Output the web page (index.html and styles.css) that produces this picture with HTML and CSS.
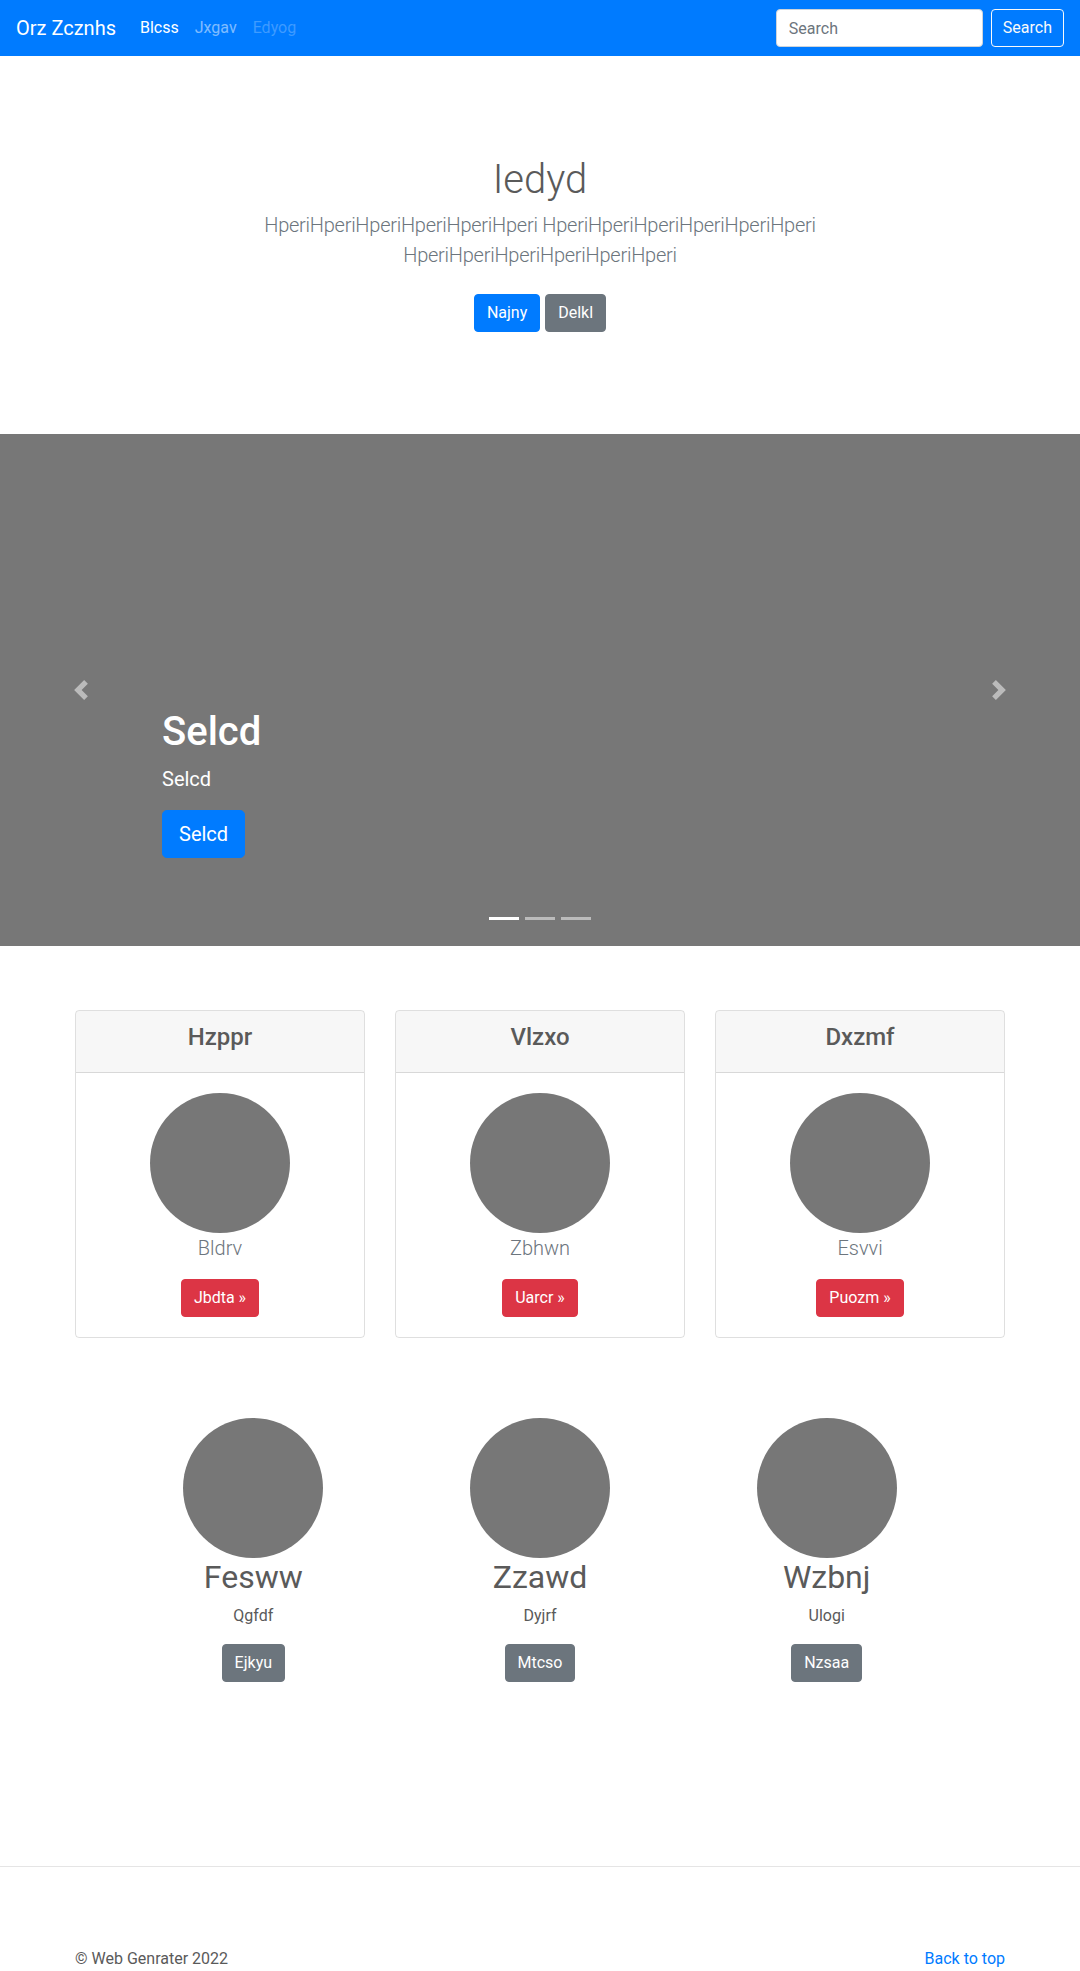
FILE: index.html
```html
<!DOCTYPE html>
<html lang="en">
<head>
<meta charset="utf-8">
<title>Orz Zcznhs</title>
<link rel="stylesheet" href="styles.css">
</head>
<body>
<nav class="navbar">
  <a class="brand" href="#">Orz Zcznhs</a>
  <ul class="nav">
    <li><a class="nav-link active" href="#">Blcss</a></li>
    <li><a class="nav-link" href="#">Jxgav</a></li>
    <li><a class="nav-link disabled" href="#">Edyog</a></li>
  </ul>
  <form class="search">
    <input class="search-input" type="text" placeholder="Search">
    <button class="search-btn" type="button">Search</button>
  </form>
</nav>

<section class="hero">
  <div class="hero-inner">
    <h1>Iedyd</h1>
    <p class="lead">HperiHperiHperiHperiHperiHperi HperiHperiHperiHperiHperiHperi HperiHperiHperiHperiHperiHperi</p>
    <p class="hero-actions">
      <a href="#" class="btn btn-primary">Najny</a>
      <a href="#" class="btn btn-secondary">Delkl</a>
    </p>
  </div>
</section>

<div class="carousel">
  <ol class="indicators">
    <li class="active"></li>
    <li></li>
    <li></li>
  </ol>
  <div class="carousel-caption">
    <h1>Selcd</h1>
    <p class="caption-text">Selcd</p>
    <p class="caption-actions"><a class="btn btn-lg btn-primary" href="#">Selcd</a></p>
  </div>
  <a class="carousel-control prev" href="#">
    <svg viewBox="0 0 8 8"><path d="M5.25 0l-4 4 4 4 1.5-1.5L4.25 4l2.5-2.5L5.25 0z"/></svg>
  </a>
  <a class="carousel-control next" href="#">
    <svg viewBox="0 0 8 8"><path d="M2.75 0l-1.5 1.5L3.75 4l-2.5 2.5L2.75 8l4-4-4-4z"/></svg>
  </a>
</div>

<div class="container">
  <div class="cards">
    <div class="card">
      <div class="card-header"><h4>Hzppr</h4></div>
      <div class="card-body">
        <div class="avatar"></div>
        <p class="card-text">Bldrv</p>
        <a href="#" class="btn btn-danger">Jbdta &raquo;</a>
      </div>
    </div>
    <div class="card">
      <div class="card-header"><h4>Vlzxo</h4></div>
      <div class="card-body">
        <div class="avatar"></div>
        <p class="card-text">Zbhwn</p>
        <a href="#" class="btn btn-danger">Uarcr &raquo;</a>
      </div>
    </div>
    <div class="card">
      <div class="card-header"><h4>Dxzmf</h4></div>
      <div class="card-body">
        <div class="avatar"></div>
        <p class="card-text">Esvvi</p>
        <a href="#" class="btn btn-danger">Puozm &raquo;</a>
      </div>
    </div>
  </div>
</div>

<div class="marketing">
  <div class="feature">
    <div class="avatar"></div>
    <h2>Fesww</h2>
    <p>Qgfdf</p>
    <a href="#" class="btn btn-secondary">Ejkyu</a>
  </div>
  <div class="feature">
    <div class="avatar"></div>
    <h2>Zzawd</h2>
    <p>Dyjrf</p>
    <a href="#" class="btn btn-secondary">Mtcso</a>
  </div>
  <div class="feature">
    <div class="avatar"></div>
    <h2>Wzbnj</h2>
    <p>Ulogi</p>
    <a href="#" class="btn btn-secondary">Nzsaa</a>
  </div>
</div>

<hr class="divider">

<footer class="container footer">
  <p>&copy; Web Genrater 2022</p>
  <p><a href="#" class="top-link">Back to top</a></p>
</footer>
</body>
</html>
```

FILE: styles.css
```css
* {
  box-sizing: border-box;
}

body {
  margin: 0;
  font-family: Roboto, "Liberation Sans", Arial, sans-serif;
  font-size: 16px;
  line-height: 1.5;
  color: #5a5a5a;
  background: #fff;
}

h1, h2, h4, p {
  margin: 0;
}

a {
  text-decoration: none;
}

/* Navbar */
.navbar {
  display: flex;
  align-items: center;
  height: 56px;
  padding: 8px 16px;
  background: #007bff;
}

.brand {
  font-size: 20px;
  line-height: 30px;
  padding: 5px 0;
  margin-right: 16px;
  color: #fff;
}

.nav {
  display: flex;
  flex: 1;
  list-style: none;
  margin: 0;
  padding: 0;
}

.nav-link {
  display: block;
  padding: 8px;
  color: rgba(255, 255, 255, 0.5);
}

.nav-link.active {
  color: #fff;
}

.nav-link.disabled {
  color: rgba(255, 255, 255, 0.25);
}

.search {
  display: flex;
  gap: 8px;
}

.search-input {
  width: 207px;
  height: 38px;
  padding: 6px 12px;
  font-family: inherit;
  font-size: 16px;
  color: #495057;
  background: #fff;
  border: 1px solid #ced4da;
  border-radius: 4px;
}

.search-input::placeholder {
  color: #6c757d;
}

.search-btn {
  height: 38px;
  padding: 6px 11px;
  font-family: inherit;
  font-size: 16px;
  line-height: 24px;
  color: #f8f9fa;
  background: transparent;
  border: 1px solid #f8f9fa;
  border-radius: 4px;
}

/* Buttons */
.btn {
  display: inline-block;
  padding: 6px 12px;
  font-size: 16px;
  line-height: 24px;
  color: #fff;
  border: 1px solid transparent;
  border-radius: 4px;
}

.btn-primary {
  background: #007bff;
  border-color: #007bff;
}

.btn-secondary {
  background: #6c757d;
  border-color: #6c757d;
}

.btn-danger {
  background: #dc3545;
  border-color: #dc3545;
}

.btn-lg {
  padding: 8px 16px;
  font-size: 20px;
  line-height: 30px;
  border-radius: 4.8px;
}

/* Hero */
.hero {
  padding: 100px 0 94px;
  text-align: center;
}

.hero-inner {
  max-width: 610px;
  margin: 0 auto;
}

.hero h1 {
  font-size: 40px;
  font-weight: 300;
  line-height: 1.2;
  margin-bottom: 6px;
}

.lead {
  font-size: 20px;
  font-weight: 300;
  line-height: 30px;
  letter-spacing: -0.25px;
  color: #6c757d;
  margin-bottom: 16px;
}

.hero-actions {
  display: flex;
  justify-content: center;
  gap: 5px;
  padding: 8px 0;
}

/* Carousel */
.carousel {
  position: relative;
  height: 512px;
  background: #777;
  margin-bottom: 64px;
}

.carousel-control {
  position: absolute;
  top: 0;
  bottom: 0;
  width: 15%;
  display: flex;
  align-items: center;
  justify-content: center;
}

.carousel-control.prev {
  left: 0;
}

.carousel-control.next {
  right: 0;
}

.carousel-control svg {
  width: 20px;
  height: 20px;
  fill: #fff;
  opacity: 0.5;
}

.carousel-caption {
  position: absolute;
  left: 15%;
  right: 15%;
  bottom: 52px;
  padding: 20px 0;
  color: #fff;
}

.carousel-caption h1 {
  font-size: 40px;
  font-weight: 500;
  line-height: 1.2;
  margin-bottom: 8px;
}

.caption-text {
  font-size: 20px;
  line-height: 30px;
  margin-bottom: 16px;
}

.caption-actions {
  margin-bottom: 16px;
}

.indicators {
  position: absolute;
  left: 0;
  right: 0;
  bottom: 16px;
  display: flex;
  justify-content: center;
  gap: 6px;
  list-style: none;
  margin: 0;
  padding: 0;
}

.indicators li {
  width: 30px;
  height: 3px;
  margin: 10px 0;
  background: #fff;
  opacity: 0.5;
}

.indicators li.active {
  opacity: 1;
}

/* Cards */
.container {
  width: 960px;
  margin: 0 auto;
  padding: 0 15px;
}

.cards {
  display: grid;
  grid-template-columns: repeat(3, 1fr);
  gap: 30px;
}

.card {
  border: 1px solid rgba(0, 0, 0, 0.125);
  border-radius: 4px;
  overflow: hidden;
  text-align: center;
}

.card-header {
  padding: 12px 20px;
  background: rgba(0, 0, 0, 0.03);
  border-bottom: 1px solid rgba(0, 0, 0, 0.125);
}

.card-header h4 {
  font-size: 24px;
  font-weight: 500;
  line-height: 1.2;
  margin-bottom: 8px;
}

.card-body {
  display: flex;
  flex-direction: column;
  align-items: center;
  padding: 20px;
}

.avatar {
  width: 140px;
  height: 140px;
  border-radius: 50%;
  background: #777;
}

.card-text {
  font-size: 20px;
  font-weight: 300;
  line-height: 30px;
  color: #6c757d;
  margin-bottom: 16px;
}

/* Marketing */
.marketing {
  width: 860px;
  margin: 80px auto 0;
  display: grid;
  grid-template-columns: repeat(3, 1fr);
}

.feature {
  display: flex;
  flex-direction: column;
  align-items: center;
  text-align: center;
}

.feature h2 {
  font-size: 32px;
  font-weight: 400;
  line-height: 1.2;
  margin-bottom: 8px;
}

.feature p {
  margin-bottom: 16px;
}

/* Footer */
.divider {
  margin: 184px 0 80px;
  border: 0;
  border-top: 1px solid rgba(0, 0, 0, 0.1);
}

.footer {
  display: flex;
  justify-content: space-between;
  padding-bottom: 48px;
}

.footer p {
  margin-bottom: 16px;
}

.top-link {
  color: #007bff;
}
```
